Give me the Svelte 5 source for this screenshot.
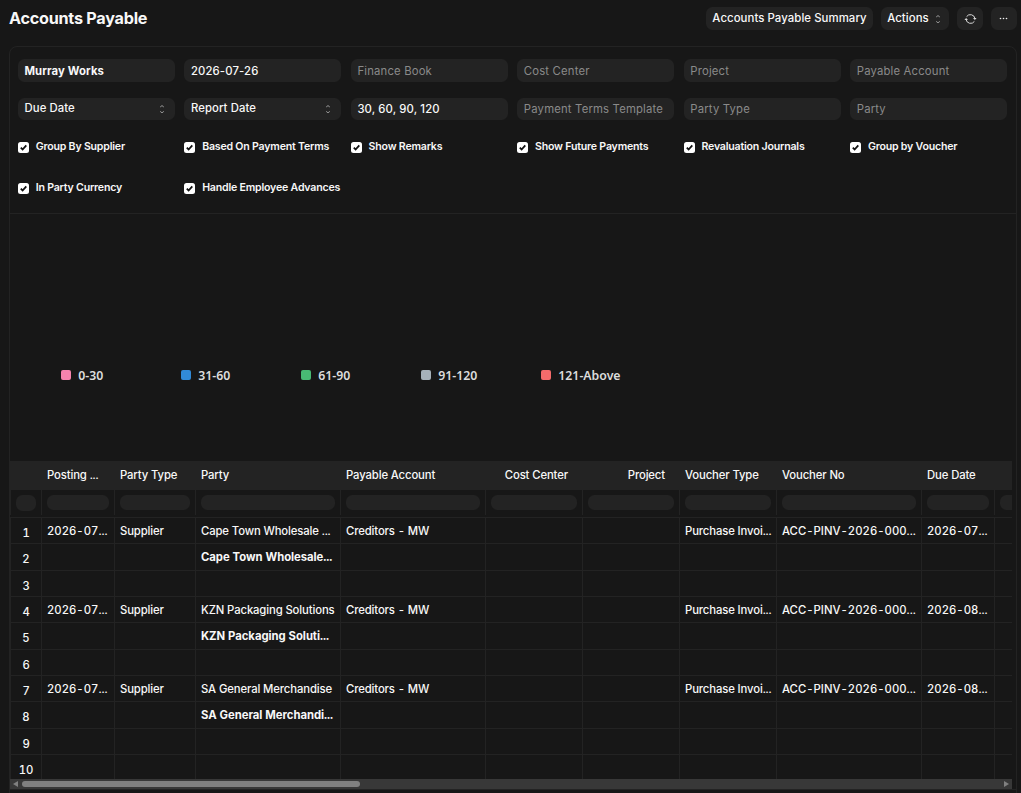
<script lang="ts">
  type Filter = { label: string; kind: 'value' | 'strong' | 'empty' | 'select' };
  type Row = { cells?: string[]; total?: string };

  const filters: Filter[] = [
    { label: 'Murray Works', kind: 'strong' },
    { label: '2026-07-26', kind: 'value' },
    { label: 'Finance Book', kind: 'empty' },
    { label: 'Cost Center', kind: 'empty' },
    { label: 'Project', kind: 'empty' },
    { label: 'Payable Account', kind: 'empty' },
    { label: 'Due Date', kind: 'select' },
    { label: 'Report Date', kind: 'select' },
    { label: '30, 60, 90, 120', kind: 'value' },
    { label: 'Payment Terms Template', kind: 'empty' },
    { label: 'Party Type', kind: 'empty' },
    { label: 'Party', kind: 'empty' },
  ];

  const checks = [
    'Group By Supplier',
    'Based On Payment Terms',
    'Show Remarks',
    'Show Future Payments',
    'Revaluation Journals',
    'Group by Voucher',
    'In Party Currency',
    'Handle Employee Advances',
  ];

  const legend = [
    { label: '0-30', color: '#f683ae' },
    { label: '31-60', color: '#318ad8' },
    { label: '61-90', color: '#48bb74' },
    { label: '91-120', color: '#a6b1b9' },
    { label: '121-Above', color: '#f56b6b' },
  ];

  const columns = [
    { label: 'Posting ...' },
    { label: 'Party Type' },
    { label: 'Party' },
    { label: 'Payable Account' },
    { label: 'Cost Center', right: true },
    { label: 'Project', right: true },
    { label: 'Voucher Type' },
    { label: 'Voucher No' },
    { label: 'Due Date' },
    { label: '' },
  ];

  const invoice = (party: string, due: string): Row => ({
    cells: ['2026-07...', 'Supplier', party, 'Creditors - MW', '', '', 'Purchase Invoi...', 'ACC-PINV-2026-000...', due, ''],
  });

  const rows: Row[] = [
    invoice('Cape Town Wholesale ...', '2026-07...'),
    { total: 'Cape Town Wholesale...' },
    {},
    invoice('KZN Packaging Solutions', '2026-08...'),
    { total: 'KZN Packaging Soluti...' },
    {},
    invoice('SA General Merchandise', '2026-08...'),
    { total: 'SA General Merchandi...' },
    {},
    {},
  ];

  function cellText(row: Row, i: number): string {
    if (row.total) return i === 2 ? row.total : '';
    return row.cells?.[i] ?? '';
  }
</script>

{#snippet sortIcon()}
  <svg class="sort" width="6" height="10" viewBox="0 0 6 10" aria-hidden="true">
    <path d="M1.2 3 L3 1.6 L4.8 3 M1.2 7.4 L3 8.8 L4.8 7.4" />
  </svg>
{/snippet}

<div class="page">
  <header class="page-head">
    <h1>Accounts Payable</h1>
    <div class="actions">
      <button class="btn summary">Accounts Payable Summary</button>
      <button class="btn menu">Actions {@render sortIcon()}</button>
      <button class="btn icon" aria-label="Refresh">
        <svg width="13" height="12" viewBox="0 0 13 12" aria-hidden="true">
          <path d="M2.6 3.6 A4.6 4.6 0 0 1 10.9 5.4 M10.4 8.4 A4.6 4.6 0 0 1 2.1 6.6" />
          <path class="tip" d="M9 5 H12.6 L10.9 6.9 Z M0.4 7 H4 L2.1 5.1 Z" />
        </svg>
      </button>
      <button class="btn icon" aria-label="Menu">
        <svg class="dots" width="10" height="4" viewBox="0 0 10 4" aria-hidden="true">
          <circle cx="1.5" cy="1.5" r="0.8" />
          <circle cx="4.5" cy="1.5" r="0.8" />
          <circle cx="7.5" cy="1.5" r="0.8" />
        </svg>
      </button>
    </div>
  </header>

  <main class="report">
    <section class="filters">
      <div class="fields">
        {#each filters as f}
          <div class="field {f.kind}">
            <span>{f.label}</span>
            {#if f.kind === 'select'}{@render sortIcon()}{/if}
          </div>
        {/each}
      </div>
      <div class="checks">
        {#each checks as label}
          <div class="check">
            <svg width="11" height="11" viewBox="0 0 11 11" aria-hidden="true">
              <rect width="11" height="11" rx="2.5" />
              <path d="M2.8 5.7 L4.6 7.5 L8.3 3.3" />
            </svg>
            <span>{label}</span>
          </div>
        {/each}
      </div>
    </section>

    <section class="chart">
      {#each legend as item}
        <div class="legend-item">
          <i style:background={item.color}></i>
          <span>{item.label}</span>
        </div>
      {/each}
    </section>

    <section class="result">
      <div class="datatable">
        <div class="row head">
          <div class="cell"></div>
          {#each columns as col}
            <div class="cell" class:right={col.right}>{col.label}</div>
          {/each}
        </div>
        <div class="row filter">
          <div class="cell num"><b></b></div>
          {#each columns as _}
            <div class="cell"><b></b></div>
          {/each}
        </div>
        <div class="body">
          {#each rows as row, n}
            <div class="row" class:total={row.total}>
              <div class="cell num">{n + 1}</div>
              {#each columns as _, i}
                <div class="cell">{cellText(row, i)}</div>
              {/each}
            </div>
          {/each}
        </div>
        <div class="scrollbar">
          <svg width="5" height="6" viewBox="0 0 5 6" aria-hidden="true"><path d="M5 0 V6 L0 3 Z" /></svg>
          <div class="track"><div class="thumb"></div></div>
          <svg width="5" height="6" viewBox="0 0 5 6" aria-hidden="true"><path d="M0 0 V6 L5 3 Z" /></svg>
        </div>
      </div>
    </section>
  </main>
</div>

<style>
  :global(body) {
    background: #171717;
    overflow: hidden;
  }

  .page {
    height: 793px;
    box-sizing: border-box;
    padding: 0 4px 0 9px;
    overflow: hidden;
    color: #f8f8f8;
    font-family: Inter, 'Liberation Sans', sans-serif;
    font-size: 11.3px;
    font-weight: 450;
    letter-spacing: 0.14px;
  }

  .page-head {
    display: flex;
    justify-content: space-between;
    align-items: center;
    height: 37px;
  }

  h1 {
    margin: -2px 0 0;
    font-size: 16.2px;
    font-weight: 700;
    letter-spacing: -0.25px;
  }

  .actions {
    display: flex;
    gap: 8px;
  }

  .btn {
    display: flex;
    align-items: center;
    justify-content: center;
    box-sizing: border-box;
    height: 23px;
    padding: 0 0 1px;
    border: none;
    border-radius: 6.5px;
    background: #232323;
    color: #f8f8f8;
    font: 500 11.4px Inter, sans-serif;
    letter-spacing: 0.06px;
  }

  .summary {
    width: 167px;
  }

  .menu {
    width: 68px;
    gap: 6px;
    padding-right: 2px;
  }

  .icon {
    width: 26px;
    padding: 0;
  }

  .icon path {
    fill: none;
    stroke: #d8d8d8;
    stroke-width: 1;
  }

  .icon .tip {
    fill: #d8d8d8;
    stroke: none;
  }

  .dots {
    fill: #f0f0f0;
  }

  .sort path {
    fill: none;
    stroke: #999;
    stroke-width: 1;
  }

  .menu .sort {
    margin-top: 1px;
  }

  .report {
    margin-top: 9px;
    height: 760px;
    box-sizing: border-box;
    border: 1px solid #232323;
    border-radius: 8px 8px 0 0;
  }

  .filters {
    height: 167px;
    box-sizing: border-box;
    padding: 12px 9px 0 8px;
    border-bottom: 1px solid #232323;
  }

  .fields {
    display: grid;
    grid-template-columns: repeat(6, minmax(0, 1fr));
    grid-template-rows: 23px 22px;
    gap: 16px 9.7px;
  }

  .field {
    display: flex;
    align-items: center;
    justify-content: space-between;
    padding: 0 10px 0 6.5px;
    border-radius: 6.5px;
    background: #232323;
    white-space: nowrap;
  }

  .field.empty {
    color: #8a8a8a;
    font-weight: 400;
    letter-spacing: 0.18px;
  }

  .field.strong {
    font-weight: 700;
    letter-spacing: 0.1px;
  }

  .field.select span {
    margin-top: -2px;
    letter-spacing: 0.1px;
  }

  .checks {
    display: grid;
    grid-template-columns: repeat(6, minmax(0, 1fr));
    column-gap: 9.7px;
    row-gap: 27px;
    padding-top: 19px;
    font-size: 10.6px;
    font-weight: 600;
    letter-spacing: -0.2px;
  }

  .check {
    display: flex;
    align-items: center;
    gap: 6.7px;
    height: 14px;
    white-space: nowrap;
  }

  .check svg {
    margin-top: 2px;
    flex-shrink: 0;
    fill: #fff;
  }

  .check path {
    fill: none;
    stroke: #111;
    stroke-width: 1.8;
  }

  .chart {
    display: flex;
    height: 247px;
    box-sizing: border-box;
    padding: 153px 0 0 51px;
    font-family: 'Noto Sans', sans-serif;
    font-size: 12.3px;
    font-weight: 600;
    letter-spacing: 0;
    color: #dcdcdc;
  }

  .legend-item {
    display: flex;
    align-items: center;
    width: 120px;
    height: 16px;
    gap: 7.3px;
    white-space: nowrap;
  }

  .legend-item i {
    width: 10px;
    height: 10px;
    border-radius: 2px;
  }

  .result {
    border-bottom: 1px solid #232323;
  }

  .datatable {
    width: 1002px;
    overflow: hidden;
    letter-spacing: -0.12px;
    font-variant-numeric: tabular-nums;
  }

  .row {
    display: grid;
    grid-template-columns: 32px 73px 81px 145px 145px 97px 97px 97px 145px 73px 73px;
    height: 26.34px;
    box-sizing: border-box;
    border-top: 1px solid #232323;
  }

  .cell {
    box-sizing: border-box;
    padding: 0 0 0 5px;
    border-right: 1px solid #232323;
    line-height: 27px;
    white-space: nowrap;
    overflow: hidden;
  }

  /* tabular dates and voucher numbers run slightly wider */
  .cell:nth-child(2),
  .cell:nth-child(9),
  .cell:nth-child(10) {
    letter-spacing: 0.02px;
  }

  .cell.num {
    padding: 0;
    border-left: 1px solid #232323;
    line-height: 31px;
    text-align: center;
  }

  .cell.right {
    padding-right: 14px;
    text-align: right;
  }

  .row.head {
    height: 29px;
    border: none;
    background: #232323;
  }

  .row.head .cell {
    line-height: 29px;
    letter-spacing: -0.12px;
  }

  .row.filter {
    height: 25px;
    margin-bottom: 2px;
    border: none;
  }

  .filter .cell {
    padding: 5px 5px 0;
  }

  .filter b {
    display: block;
    height: 15px;
    border-radius: 6.5px;
    background: #232323;
  }

  .filter .num b {
    height: 16px;
  }

  .row.total {
    font-weight: 700;
    letter-spacing: -0.04px;
  }

  .total .num {
    font-weight: 450;
  }

  .body {
    height: 262px;
    overflow: hidden;
  }

  .scrollbar {
    display: flex;
    align-items: center;
    justify-content: space-between;
    height: 10px;
    padding: 0 3px;
    background: #383838;
    fill: #808080;
  }

  .track {
    width: 982px;
  }

  .thumb {
    width: 338px;
    height: 6px;
    margin-left: 2px;
    border-radius: 3px;
    background: #808080;
  }
</style>
